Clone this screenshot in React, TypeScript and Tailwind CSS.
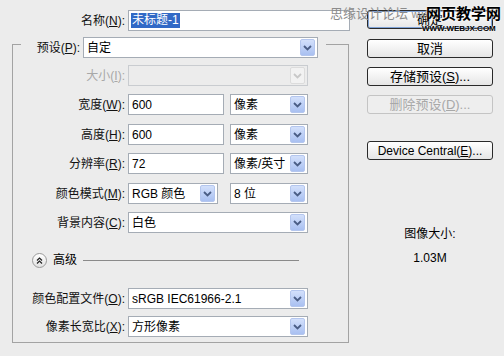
import React from "react";

const FONT = "font-['Liberation_Sans','Noto_Sans_CJK_SC',sans-serif]";

function Arrow({ disabled = false }: { disabled?: boolean }) {
  return (
    <div
      className={
        disabled
          ? "w-[15px] h-[17px] mr-[2px] rounded-[2px] border border-[#dcdcdc] bg-[#f2f2f2] flex items-center justify-center"
          : "w-[15px] h-[17px] mr-[2px] rounded-[2px] border border-[#b4c6ee] bg-gradient-to-b from-[#d3e0fb] to-[#a9c0f1] flex items-center justify-center"
      }
    >
      <svg width="9" height="6" viewBox="0 0 9 6">
        <path
          d="M1 1 L4.5 4.5 L8 1"
          stroke={disabled ? "#c8c8c8" : "#4a5d85"}
          strokeWidth="1.8"
          fill="none"
        />
      </svg>
    </div>
  );
}

function Select({ value, w, disabled = false }: { value: string; w: string; disabled?: boolean }) {
  return (
    <div
      className={`${w} h-[21px] flex items-center justify-between border ${
        disabled ? "border-[#c9ccd0] bg-[#ececec]" : "border-[#a5acb5] bg-white"
      }`}
    >
      <span className="pl-[3px] text-[12px] text-black whitespace-nowrap">{value}</span>
      <Arrow disabled={disabled} />
    </div>
  );
}

function Input({ value, w }: { value: string; w: string }) {
  return (
    <div className={`${w} h-[21px] flex items-center border border-[#a5acb5] bg-white`}>
      <span className="pl-[3px] text-[12px] text-black">{value}</span>
    </div>
  );
}

function Label({ text, k, tail = "):", disabled = false, w = "w-[115px]" }: { text: string; k: string; tail?: string; disabled?: boolean; w?: string }) {
  return (
    <div className={`${w} pr-[3px] text-right text-[12px] whitespace-nowrap ${disabled ? "text-[#a8a8a8]" : "text-[#111]"}`}>
      {text}(<span className="underline">{k}</span>{tail}
    </div>
  );
}

function Button({ children, disabled = false, main = false, small = false }: { children: React.ReactNode; disabled?: boolean; main?: boolean; small?: boolean }) {
  return (
    <div
      className={`w-[126px] h-[19px] rounded-[3px] border flex items-center justify-center whitespace-nowrap ${
        small ? "text-[12px]" : "text-[13px]"
      } ${
        disabled
          ? "border-[#c4c4c4] bg-[#eeeeee] text-[#a8a8a8]"
          : main
          ? "border-[#2a2a2a] bg-gradient-to-b from-[#ffffff] to-[#e6e6e6] text-black shadow-[inset_0_0_0_1px_#7fa2d6]"
          : "border-[#2a2a2a] bg-gradient-to-b from-[#ffffff] to-[#e6e6e6] text-black"
      }`}
    >
      {children}
    </div>
  );
}

export default function App() {
  return (
    <div className={`relative w-[504px] h-[356px] bg-[#ececec] flex overflow-hidden ${FONT}`}>
      {/* left column */}
      <div className="w-[355px] pt-[10px] flex flex-col">
        <div className="flex items-center h-[21px]">
          <Label text="名称" k="N" w="w-[128px]" />
          <div className="w-[222px] h-[21px] flex items-center border border-[#a5acb5] bg-white">
            <span className="ml-[2px] px-[1px] bg-[#3169c6] text-white text-[12px] leading-[15px]">未标题-1</span>
          </div>
        </div>

        <div className="ml-[12px] mt-[13px] w-[337px] h-[299px] border border-[#a3a3a3]">
          {/* preset row on top of the group line */}
          <div className="-mt-[8px] flex items-center h-[21px]">
            <div className="w-[8px]" />
            <div className="h-full bg-[#ececec] flex items-center">
              <Label text="预设" k="P" w="w-[62px]" />
            </div>
            <Select value="自定" w="w-[235px]" />
            <div className="w-[8px] h-full bg-[#ececec]" />
          </div>

          <div className="mt-[7px] flex items-center">
            <Label text="大小" k="I" disabled />
            <Select value="" w="w-[180px]" disabled />
          </div>
          <div className="mt-[8px] flex items-center">
            <Label text="宽度" k="W" />
            <Input value="600" w="w-[96px]" />
            <div className="w-[6px]" />
            <Select value="像素" w="w-[78px]" />
          </div>
          <div className="mt-[9px] flex items-center">
            <Label text="高度" k="H" />
            <Input value="600" w="w-[96px]" />
            <div className="w-[6px]" />
            <Select value="像素" w="w-[78px]" />
          </div>
          <div className="mt-[8px] flex items-center">
            <Label text="分辨率" k="R" />
            <Input value="72" w="w-[96px]" />
            <div className="w-[6px]" />
            <Select value="像素/英寸" w="w-[78px]" />
          </div>
          <div className="mt-[9px] flex items-center">
            <Label text="颜色模式" k="M" />
            <Select value="RGB 颜色" w="w-[90px]" />
            <div className="w-[12px]" />
            <Select value="8 位" w="w-[78px]" />
          </div>
          <div className="mt-[8px] flex items-center">
            <Label text="背景内容" k="C" />
            <Select value="白色" w="w-[180px]" />
          </div>

          <div className="mt-[19px] h-[16px] flex items-center">
            <div className="ml-[19px] w-[15px] h-[15px] rounded-full border border-[#9a9a9a] bg-gradient-to-b from-white to-[#e2e2e2] flex items-center justify-center">
              <svg width="7" height="7" viewBox="0 0 7 7">
                <path d="M1 3.5 L3.5 1 L6 3.5 M1 6.5 L3.5 4 L6 6.5" stroke="#222" strokeWidth="1.2" fill="none" />
              </svg>
            </div>
            <span className="ml-[6px] text-[12px] text-black">高级</span>
            <div className="ml-[6px] w-[216px] h-px bg-[#8a8a8a]" />
          </div>

          <div className="mt-[20px] flex items-center">
            <Label text="颜色配置文件" k="O" />
            <Select value="sRGB IEC61966-2.1" w="w-[180px]" />
          </div>
          <div className="mt-[7px] flex items-center">
            <Label text="像素长宽比" k="X" />
            <Select value="方形像素" w="w-[180px]" />
          </div>
        </div>
      </div>

      {/* right column */}
      <div className="pl-[12px] pt-[10px] flex flex-col items-center">
        <Button main>确定</Button>
        <div className="mt-[10px]">
          <Button>取消</Button>
        </div>
        <div className="mt-[9px]">
          <Button>
            存储预设(<span className="underline">S</span>)...
          </Button>
        </div>
        <div className="mt-[9px]">
          <Button disabled>
            删除预设(<span className="underline">D</span>)...
          </Button>
        </div>
        <div className="mt-[27px]">
          <Button small>
            Device Central(<span className="underline">E</span>)...
          </Button>
        </div>
        <div className="mt-[66px] text-[12px] text-black leading-[16px]">图像大小:</div>
        <div className="mt-[8px] text-[12px] text-black leading-[16px]">1.03M</div>
      </div>

      {/* watermark */}
      <div className="absolute left-[330px] top-[6px] text-[13px] text-[#8c8c8c] whitespace-nowrap leading-[16px]">
        思缘设计论坛 <span className="text-[10px]">www.</span>
      </div>
      <div className="absolute left-[426px] top-[5px] text-[15px] font-bold text-black whitespace-nowrap leading-[18px] [text-shadow:0_0_2px_#fff,0_0_2px_#fff]">
        网页教学网
      </div>
      <div className="absolute left-[422px] top-[24px] text-[8px] font-bold text-black whitespace-nowrap leading-[10px] [text-shadow:0_0_2px_#fff]">
        WWW.WEBJX.COM
      </div>
    </div>
  );
}
